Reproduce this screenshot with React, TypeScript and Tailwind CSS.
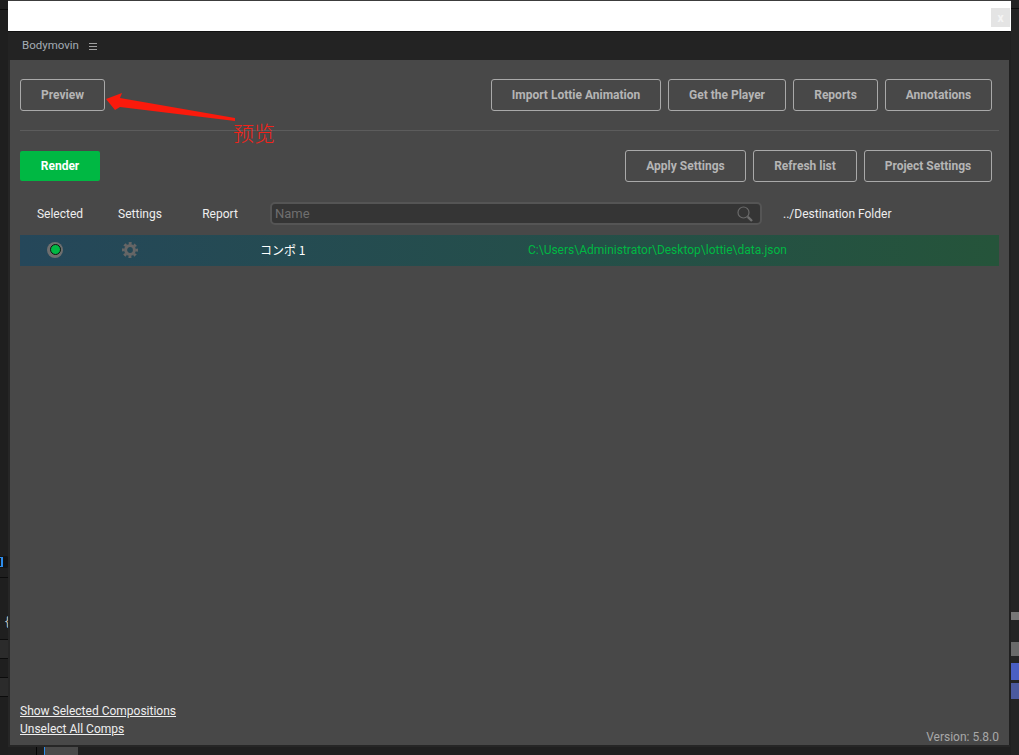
const FONT = "font-['Roboto','Liberation_Sans',sans-serif]";

function OutlineButton({ label, width }: { label: string; width: string }) {
	return (
		<button
			className={`${width} h-8 shrink-0 rounded-[3px] border border-[#a9a9a9] text-xs font-bold text-[#b5b5b5]`}
		>
			{label}
		</button>
	);
}

function GearIcon() {
	return (
		<svg width="16" height="16" viewBox="0 0 16 16" fill="none">
			<circle cx="8" cy="8" r="4.4" stroke="#666666" strokeWidth="3" />
			<circle cx="8" cy="8" r="6.7" stroke="#666666" strokeWidth="2.6" strokeDasharray="2.9 2.36" strokeDashoffset="1.45" />
		</svg>
	);
}

function LeftStrip() {
	return (
		<div className="flex w-2 shrink-0 flex-col bg-[#1f1f1f]">
			<div className="mt-[9px] h-px bg-[#0c0c0c]" />
			{/* tool button peeking out from behind the panel */}
			<div className="mt-[546px] flex h-3 items-center rounded-r-[2px] bg-[#141414]">
				<div className="h-[10px] w-[3px] border-y border-r-2 border-[#2d8ceb]" />
			</div>
			<div className="mt-[9px] h-px bg-[#0c0c0c]" />
			<div className="mt-[37px] pl-1 font-['Liberation_Mono',monospace] text-xs leading-[14px] text-[#c8c8c8]">
				{"{"}
			</div>
			<div className="mt-[10px] h-px bg-[#0c0c0c]" />
			<div className="h-[18px] bg-[#2b2b2b]" />
			<div className="h-px bg-[#0c0c0c]" />
			<div className="mt-[18px] h-px bg-[#0c0c0c]" />
			<div className="h-[18px] bg-[#2b2b2b]" />
			<div className="h-px bg-[#0c0c0c]" />
		</div>
	);
}

function RightStrip() {
	return (
		<div className="flex min-w-0 flex-1 flex-col bg-[#242424]">
			<div className="mt-[8px] h-px bg-[#0c0c0c]" />
			<div className="mt-[603px] h-2 bg-[#777777]" />
			<div className="mt-[22px] h-[14px] bg-[#6a6a6a]" />
			<div className="mt-[7px] h-[17px] bg-[#4a5fc4]" />
			<div className="mt-[3px] h-[16px] bg-[#4c5a9e]" />
		</div>
	);
}

function SearchBox() {
	return (
		<div className="flex h-[23px] w-[492px] items-center justify-between rounded-[5px] border-2 border-[#555555] bg-[#353535] pl-[3px] pr-[6px]">
			<span className="text-[13px] text-[#6f6f6f]">Name</span>
			<svg width="18" height="18" viewBox="0 0 18 18" fill="none">
				<circle cx="7.5" cy="7.5" r="5.5" stroke="#6a6a6a" strokeWidth="1.2" />
				<path d="M11.8 11.8 L16 16" stroke="#6f6f6f" strokeWidth="2.4" />
			</svg>
		</div>
	);
}

function CompRow() {
	return (
		<div className="mt-[10px] flex h-[31px] items-center bg-gradient-to-r from-[#25475a] to-[#25543a] pb-[2px]">
			<div className="flex w-[70px] justify-center">
				<div className="flex size-4 items-center justify-center rounded-full bg-[#6e6e6e]">
					<div className="size-[11px] rounded-full border border-[#111111] bg-[#00b843]" />
				</div>
			</div>
			<div className="flex w-[80px] justify-center">
				<GearIcon />
			</div>
			<div className="ml-[90px] w-[268px] font-['Noto_Sans_CJK_JP',sans-serif] text-xs text-white">
				コンポ 1
			</div>
			<div className="text-xs text-[#00b843]">
				C:\Users\Administrator\Desktop\lottie\data.json
			</div>
		</div>
	);
}

export default function App() {
	return (
		<div className={`${FONT} relative flex h-[755px] w-[1019px] overflow-hidden bg-[#202020]`}>
			<LeftStrip />

			<div className="flex w-[1003px] shrink-0 flex-col">
				<div className="h-px shrink-0 bg-[#3c3c3c]" />
				{/* blank title bar */}
				<div className="flex h-[30px] shrink-0 items-start justify-end bg-white pt-[7px] pr-[1px]">
					<div className="flex size-[19px] items-center justify-center bg-[#e4e4e4] text-xs font-bold text-[#f4f4f4]">
						x
					</div>
				</div>

				{/* panel tab */}
				<div className="flex h-[29px] w-[1002px] shrink-0 items-center gap-[10px] border-t border-[#111111] bg-[#232323] pl-[14px]">
					<span className="text-[11.5px] text-[#a4acb4]">Bodymovin</span>
					<div className="flex w-2 flex-col gap-[2px]">
						<div className="h-px bg-[#a0a0a0]" />
						<div className="h-px bg-[#a0a0a0]" />
						<div className="h-px bg-[#a0a0a0]" />
					</div>
				</div>

				{/* panel body */}
				<div className="flex h-[685px] w-[1001px] shrink-0 flex-col border-l-2 border-[#262626] bg-[#484848] pl-[10px] pr-[10px]">
					<div className="mt-[19px] flex pr-[7px]">
						<OutlineButton label="Preview" width="w-[85px]" />
						<div className="ml-auto flex gap-[7px]">
							<OutlineButton label="Import Lottie Animation" width="w-[170px]" />
							<OutlineButton label="Get the Player" width="w-[118px]" />
							<OutlineButton label="Reports" width="w-[85px]" />
							<OutlineButton label="Annotations" width="w-[107px]" />
						</div>
					</div>

					<div className="mt-[19px] h-px bg-[#5c5c5c]" />

					<div className="mt-[19px] flex items-center pr-[7px]">
						<button className="h-[30px] w-20 rounded-[2px] bg-[#00b843] text-xs font-bold text-white">
							Render
						</button>
						<div className="ml-auto flex gap-[7px]">
							<OutlineButton label="Apply Settings" width="w-[121px]" />
							<OutlineButton label="Refresh list" width="w-[104px]" />
							<OutlineButton label="Project Settings" width="w-[128px]" />
						</div>
					</div>

					<div className="mt-[20px] flex items-center text-xs text-[#eeeeee]">
						<div className="w-20 text-center">Selected</div>
						<div className="w-20 text-center">Settings</div>
						<div className="w-20 text-center">Report</div>
						<div className="ml-[10px]">
							<SearchBox />
						</div>
						<div className="ml-[21px]">../Destination Folder</div>
					</div>

					<CompRow />

					<div className="mt-auto flex items-end justify-between">
						<div className="mb-2 flex flex-col gap-[3px] text-xs leading-[15px] text-[#eeeeee] underline">
							<span>Show Selected Compositions</span>
							<span>Unselect All Comps</span>
						</div>
						<span className="text-xs leading-[15px] text-[#a8a8a8]">Version: 5.8.0</span>
					</div>
				</div>

				{/* bottom edge of the window and what is behind it */}
				<div className="h-[2px] w-[1002px] shrink-0 bg-[#262626]" />
				<div className="flex flex-1">
					<div className="ml-[28px] w-px bg-[#050505]" />
					<div className="ml-[7px] w-px bg-[#2d8ceb]" />
					<div className="w-[33px] bg-[#4a4a4a]" />
				</div>
			</div>

			<RightStrip />

			{/* red annotation drawn over the screenshot */}
			<svg className="absolute left-0 top-0" width="300" height="150" viewBox="0 0 300 150">
				<polygon points="106,99 122,93 120,98 235,118 235,121 120,107 115,110" fill="#fb1a0c" />
			</svg>
			<span className="absolute left-[233px] top-[117px] font-['Noto_Sans_CJK_SC',sans-serif] text-[21px] font-light leading-[30px] text-[#f2231a]">
				预览
			</span>
		</div>
	);
}
